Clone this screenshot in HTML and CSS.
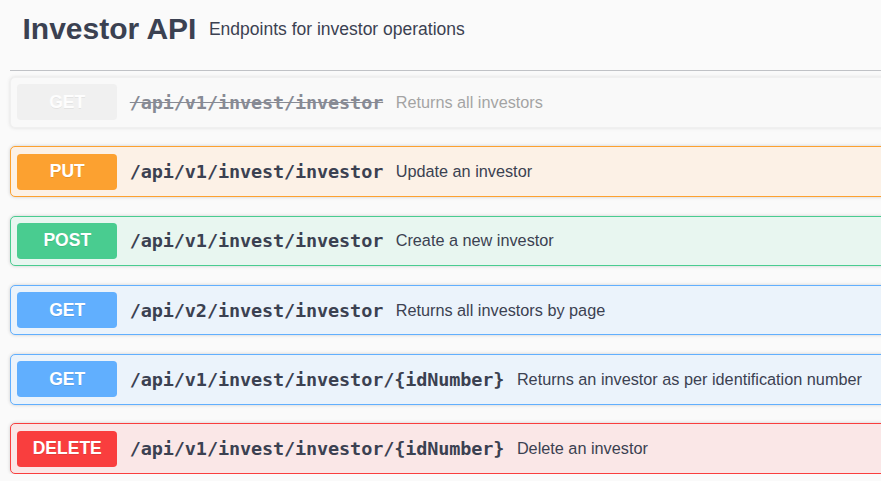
FILE: index.html
```html
<!DOCTYPE html>
<html>
<head>
<meta charset="utf-8">
<link rel="stylesheet" href="styles.css">
</head>
<body>
<main class="page">
  <h3 class="tag">
    <span class="tag-name">Investor API</span>
    <small class="tag-desc">Endpoints for investor operations</small>
  </h3>
  <div class="ops">
    <div class="op op-deprecated">
      <span class="method">GET</span>
      <span class="path">/api/v1/invest/investor</span>
      <span class="desc">Returns all investors</span>
    </div>
    <div class="op op-put">
      <span class="method">PUT</span>
      <span class="path">/api/v1/invest/investor</span>
      <span class="desc">Update an investor</span>
    </div>
    <div class="op op-post">
      <span class="method">POST</span>
      <span class="path">/api/v1/invest/investor</span>
      <span class="desc">Create a new investor</span>
    </div>
    <div class="op op-get">
      <span class="method">GET</span>
      <span class="path">/api/v2/invest/investor</span>
      <span class="desc">Returns all investors by page</span>
    </div>
    <div class="op op-get">
      <span class="method">GET</span>
      <span class="path">/api/v1/invest/investor/{idNumber}</span>
      <span class="desc">Returns an investor as per identification number</span>
    </div>
    <div class="op op-delete">
      <span class="method">DELETE</span>
      <span class="path">/api/v1/invest/investor/{idNumber}</span>
      <span class="desc">Delete an investor</span>
    </div>
  </div>
</main>
</body>
</html>
```
FILE: styles.css
```css
html, body {
  margin: 0;
  padding: 0;
  background: #fafafa;
  overflow: hidden;
}
body {
  font-family: "Liberation Sans", Arial, sans-serif;
  color: #3b4151;
}
.page {
  padding-left: 10px;
  width: 1100px;
}
.tag {
  display: flex;
  align-items: center;
  margin: 0 0 6px 0;
  padding: 11px 25px 23px 12.5px;
  border-bottom: 1px solid rgba(59, 65, 81, 0.3);
  font-weight: 700;
  font-size: 30px;
  line-height: 36px;
}
.tag-desc {
  font-size: 17.5px;
  font-weight: 400;
  padding: 0 12.5px;
  line-height: 20px;
}
.ops {
  display: flex;
  flex-direction: column;
  gap: 18.75px;
}
.op {
  display: flex;
  align-items: center;
  padding: 6.25px;
  border: 1px solid;
  border-radius: 5px;
  box-shadow: 0 0 3.75px rgba(0, 0, 0, 0.19);
}
.method {
  min-width: 100px;
  padding: 7.5px 0;
  line-height: 21px;
  text-align: center;
  border-radius: 3.75px;
  color: #fff;
  font-weight: 700;
  font-size: 17.5px;
  text-shadow: 0 1px 0 rgba(0, 0, 0, 0.1);
}
.path {
  font-family: "DejaVu Sans Mono", "Liberation Mono", monospace;
  font-weight: 700;
  font-size: 18.5px;
  letter-spacing: -0.12px;
  padding: 0 12.5px;
  color: #3b4151;
}
.desc {
  font-size: 16.25px;
  color: #3b4151;
}
.op-put { border-color: #fca130; background: #fcf1e6; }
.op-put .method { background: #fca130; }
.op-post { border-color: #49cc90; background: #e8f6f0; }
.op-post .method { background: #49cc90; }
.op-get { border-color: #61affe; background: #ebf3fb; }
.op-get .method { background: #61affe; }
.op-delete { border-color: #f93e3e; background: #fae7e7; }
.op-delete .method { background: #f93e3e; }
.op-deprecated {
  opacity: 0.6;
  border-color: #ebebeb;
  background: #f9f9f9;
}
.op-deprecated .method { background: #ebebeb; }
.op-deprecated .path { text-decoration: line-through; color: #3b4151; }
.op-deprecated .desc { color: #6b6b6b; }
```
